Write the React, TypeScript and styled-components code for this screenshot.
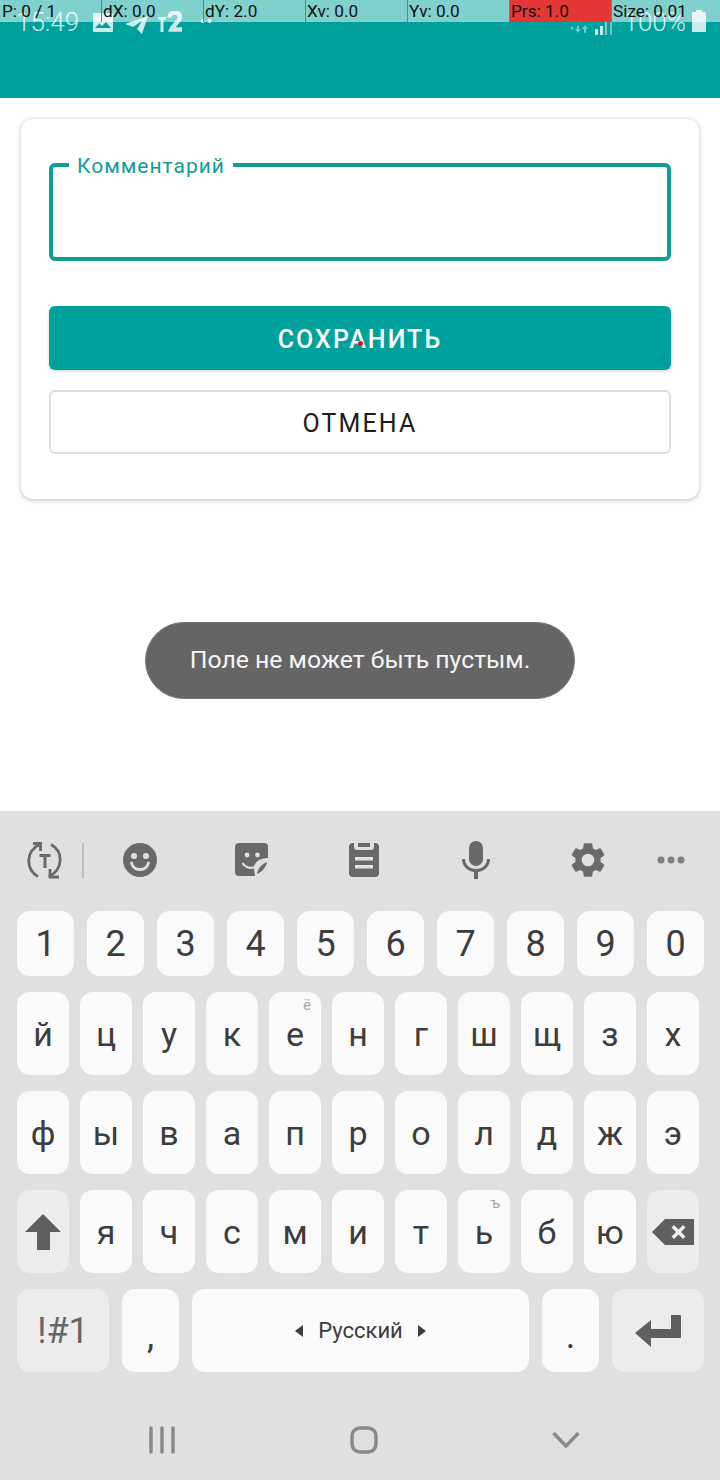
import styled, { createGlobalStyle } from "styled-components";

const POINTER_STATS = [
  { label: "P: 0 / 1" },
  { label: "dX: 0.0" },
  { label: "dY: 2.0" },
  { label: "Xv: 0.0" },
  { label: "Yv: 0.0" },
  { label: "Prs: 1.0", alert: true },
  { label: "Size: 0.01" },
];

const NUMBERS = ["1", "2", "3", "4", "5", "6", "7", "8", "9", "0"];
const ROW_ONE = ["й", "ц", "у", "к", "е", "н", "г", "ш", "щ", "з", "х"];
const ROW_TWO = ["ф", "ы", "в", "а", "п", "р", "о", "л", "д", "ж", "э"];
const ROW_THREE = ["я", "ч", "с", "м", "и", "т", "ь", "б", "ю"];
const HINTS: Record<string, string> = { е: "ё", ь: "ъ" };

const GlobalStyle = createGlobalStyle`
  html, body {
    margin: 0;
    padding: 0;
    background: #fff;
  }
  * {
    box-sizing: border-box;
  }
`;

const Page = styled.div`
  display: flex;
  flex-direction: column;
  font-family: Roboto, "Noto Sans", sans-serif;
  height: 1480px;
  overflow: hidden;
  position: relative;
  width: 720px;
`;

const Header = styled.header`
  background: #00a19d;
  flex-shrink: 0;
  height: 98px;
  position: relative;
`;

const StatusBar = styled.div`
  align-items: center;
  color: rgba(255, 255, 255, 0.8);
  display: flex;
  height: 44px;
  padding: 0 14px 0 16px;
`;

const Clock = styled.span`
  font-size: 26px;
  font-weight: 300;
  margin-right: 14px;
`;

const StatusIcon = styled.svg<{ $gap?: number; $drop?: number }>`
  display: block;
  fill: currentColor;
  flex-shrink: 0;
  margin-right: ${({ $gap }) => $gap ?? 0}px;
  margin-top: ${({ $drop }) => $drop ?? 0}px;
`;

const Spacer = styled.div`
  flex: 1;
`;

const Percent = styled.span`
  font-size: 26px;
  font-weight: 300;
  margin: 0 6px 0 12px;
`;

const PointerBar = styled.div`
  display: grid;
  grid-template-columns: 101px repeat(6, 102px) 7px;
  height: 22px;
  left: 0;
  position: absolute;
  top: 0;
  width: 720px;
`;

const PointerCell = styled.div<{ $alert?: boolean }>`
  background: ${({ $alert }) =>
    $alert ? "#e63737" : "rgba(255, 255, 255, 0.5)"};
  border-left: 1px solid #17a6a2;
  color: #111;
  font-size: 17.2px;
  line-height: 22px;
  overflow: visible;
  padding-left: 1px;
  white-space: nowrap;
  &:first-child {
    border-left: none;
    padding-left: 2px;
  }
`;

const BarTail = styled.div`
  background: rgba(255, 255, 255, 0.5);
`;

const Main = styled.main`
  flex: 1;
  padding: 21px 21px 0;
`;

const Card = styled.section`
  background: #fff;
  border-radius: 12px;
  box-shadow: 0 1px 5px rgba(0, 0, 0, 0.28);
  display: flex;
  flex-direction: column;
  height: 380px;
  padding: 44px 28px 0;
`;

const Field = styled.div`
  border: 4px solid #0f9d98;
  border-radius: 6px;
  height: 98px;
  margin-bottom: 45px;
  position: relative;
`;

const FieldLabel = styled.label`
  background: #fff;
  color: #0f9d98;
  font-size: 21px;
  left: 16px;
  letter-spacing: 1px;
  line-height: 24px;
  padding: 0 8px;
  position: absolute;
  top: -13px;
`;

const ActionButton = styled.button<{ $primary?: boolean }>`
  background: ${({ $primary }) => ($primary ? "#00a19d" : "#fff")};
  border: ${({ $primary }) => ($primary ? "none" : "2px solid #dedede")};
  border-radius: 6px;
  box-shadow: ${({ $primary }) =>
    $primary ? "0 1px 3px rgba(0, 0, 0, 0.2)" : "none"};
  color: ${({ $primary }) => ($primary ? "#fff" : "#1c1c1c")};
  font-family: inherit;
  font-size: 25px;
  font-weight: ${({ $primary }) => ($primary ? 500 : 400)};
  height: 64px;
  letter-spacing: 2.1px;
  margin-bottom: 20px;
  padding: 2px 0 0;
  position: relative;
  width: 100%;
`;

const TouchDot = styled.span`
  background: #d8141c;
  border-radius: 50%;
  height: 5px;
  left: 309px;
  position: absolute;
  top: 35px;
  width: 5px;
`;

const Toast = styled.div`
  align-items: center;
  background: #656565;
  border: 1px solid #777;
  border-radius: 39px;
  color: #f5f5f5;
  display: flex;
  font-size: 24.8px;
  height: 77px;
  justify-content: center;
  left: 145px;
  padding-bottom: 2px;
  position: absolute;
  top: 622px;
  width: 430px;
`;

const Keyboard = styled.div`
  background: #e0e0e0;
  flex-shrink: 0;
  height: 669px;
`;

const Toolbar = styled.div`
  align-items: center;
  color: #696969;
  display: flex;
  height: 100px;
  padding: 0 0 2px 17px;
`;

const ToolSlot = styled.div<{ $width: number }>`
  align-items: center;
  display: flex;
  flex-shrink: 0;
  justify-content: center;
  width: ${({ $width }) => $width}px;
`;

const ToolDivider = styled.div`
  background: #bdbdbd;
  flex-shrink: 0;
  height: 35px;
  margin-left: 9px;
  width: 2px;
`;

const ToolIcon = styled.svg`
  display: block;
  fill: currentColor;
  flex-shrink: 0;
`;

const KeyRows = styled.div`
  display: flex;
  flex-direction: column;
  gap: 16px;
  padding-left: 17px;
`;

const KeyRow = styled.div<{ $gap: number }>`
  display: flex;
  gap: ${({ $gap }) => $gap}px;
`;

const Key = styled.div<{ $width?: number; $short?: boolean; $fn?: boolean }>`
  align-items: center;
  background: ${({ $fn }) => ($fn ? "#ececec" : "#fafafa")};
  border-radius: 13px;
  color: #3d3d3d;
  display: flex;
  flex-shrink: 0;
  font-size: ${({ $short }) => ($short ? 36 : 34)}px;
  height: ${({ $short }) => ($short ? 65 : 83)}px;
  justify-content: center;
  position: relative;
  width: ${({ $width }) => $width ?? 52}px;
`;

const KeyHint = styled.span`
  color: #a8a8a8;
  font-size: 15px;
  line-height: 14px;
  position: absolute;
  right: 10px;
  top: 6px;
`;

const SymbolLabel = styled.span`
  color: #666;
  font-size: 36px;
`;

const Punctuation = styled.span`
  font-size: 36px;
  padding-top: 10px;
`;

const LanguageLabel = styled.div`
  align-items: center;
  color: #3d3d3d;
  display: flex;
  font-size: 22px;
  gap: 15px;
`;

const ArrowLeft = styled.span`
  border-bottom: 6px solid transparent;
  border-right: 8px solid #3d3d3d;
  border-top: 6px solid transparent;
`;

const ArrowRight = styled.span`
  border-bottom: 6px solid transparent;
  border-left: 8px solid #3d3d3d;
  border-top: 6px solid transparent;
`;

const NavBar = styled.nav`
  align-items: center;
  color: #8a8a8a;
  display: flex;
  height: 80px;
  margin-top: 28px;
  padding-left: 61px;
`;

const NavSlot = styled.div`
  display: flex;
  justify-content: center;
  width: 202px;
`;

const NavIcon = styled.svg`
  display: block;
  fill: none;
  stroke: currentColor;
`;

function KeyLetter({ letter }: { letter: string }) {
  return (
    <Key>
      {letter}
      {HINTS[letter] && <KeyHint>{HINTS[letter]}</KeyHint>}
    </Key>
  );
}

export default function App(): JSX.Element {
  return (
    <Page>
      <GlobalStyle />
      <Header>
        <StatusBar>
          <Clock>15:49</Clock>
          <StatusIcon width="20" height="19" viewBox="0 0 20 19" $gap={12}>
            <path d="M1 0h18a1 1 0 0 1 1 1v17a1 1 0 0 1-1 1H1a1 1 0 0 1-1-1V1a1 1 0 0 1 1-1zm1 15h16l-5-6-4 4-2.500-2.500z" fillRule="evenodd" />
            <circle cx="6" cy="5.500" r="2" />
          </StatusIcon>
          <StatusIcon width="23" height="18" viewBox="0 0 23 18" $gap={9} $drop={5}>
            <path d="M23 0 0 8l8 3 9-6-5 8 5 5z" />
          </StatusIcon>
          <StatusIcon width="25" height="21" viewBox="0 0 25 21" $gap={18} $drop={-1}>
            <path d="M1 6h8v2.500H6.500V21h-3V8.500H1z" />
            <path d="M12.500 6.500C12.500 0 23 0 23 6c0 4-6 7-8.500 12.500H25" fill="none" stroke="currentColor" strokeWidth="4.500" />
          </StatusIcon>
          <StatusIcon width="12" height="6" viewBox="0 0 12 6" $drop={-2}>
            <circle cx="2.500" cy="3" r="2" />
            <circle cx="9.500" cy="3" r="2" />
          </StatusIcon>
          <Spacer />
          <StatusIcon width="26" height="22" viewBox="0 0 26 22" $gap={5} $drop={-1}>
            <g fill="none" stroke="currentColor" strokeWidth="2.500" opacity="0.25">
              <path d="M1 7a14 14 0 0 1 20 0" />
              <path d="M5 11a9 9 0 0 1 12 0" />
            </g>
            <g opacity="0.55">
              <circle cx="8" cy="17" r="1.500" />
              <path d="M13 15h2v3h2l-3 4-3-4h2zM21 14l3 4h-2v4h-2v-4h-2z" />
            </g>
          </StatusIcon>
          <StatusIcon width="17" height="16" viewBox="0 0 17 16" $drop={9}>
            <path d="M0 10h3v6H0z" />
            <path d="M5 7h3v9H5z" />
            <path d="M10 3h2v13h-2z" opacity="0.6" />
            <path d="M15 0h2v16h-2z" opacity="0.5" />
          </StatusIcon>
          <Percent>100%</Percent>
          <StatusIcon width="14" height="22" viewBox="0 0 14 22" $drop={-2}>
            <path d="M4 0h6v2h3a1 1 0 0 1 1 1v18a1 1 0 0 1-1 1H1a1 1 0 0 1-1-1V3a1 1 0 0 1 1-1h3z" />
          </StatusIcon>
        </StatusBar>
        <PointerBar>
          {POINTER_STATS.map(stat => (
            <PointerCell key={stat.label} $alert={stat.alert}>
              {stat.label}
            </PointerCell>
          ))}
          <BarTail />
        </PointerBar>
      </Header>

      <Main>
        <Card>
          <Field>
            <FieldLabel>Комментарий</FieldLabel>
          </Field>
          <ActionButton $primary>
            СОХРАНИТЬ
            <TouchDot />
          </ActionButton>
          <ActionButton>ОТМЕНА</ActionButton>
        </Card>
      </Main>

      <Toast>Поле не может быть пустым.</Toast>

      <Keyboard>
        <Toolbar>
          <ToolSlot $width={56}>
            <ToolIcon width="37" height="37" viewBox="0 0 37 37">
              <g fill="none" stroke="currentColor" strokeWidth="2.800">
                <path d="M11 34.500C-2 27-1 9 12.500 2.500" />
                <path d="M6 1.500h7.500V9" />
                <path d="M24 2.500c13 7 12 25-2 32" />
                <path d="M23 27v8h9" />
              </g>
              <path d="M12.500 12h11v3h-4v11h-3V15h-4z" />
            </ToolIcon>
          </ToolSlot>
          <ToolDivider />
          <ToolSlot $width={112}>
            <ToolIcon width="34" height="34" viewBox="0 0 34 34">
              <path
                fillRule="evenodd"
                d="M17 0a17 17 0 1 1 0 34 17 17 0 0 1 0-34zM11 10a3 3 0 1 0 0 6 3 3 0 0 0 0-6zm12 0a3 3 0 1 0 0 6 3 3 0 0 0 0-6zM7 19c1 6 5 9 10 9s9-3 10-9l-2.500-.5C23.500 23 21 25 17 25s-6.500-2-7.500-6.500z"
              />
            </ToolIcon>
          </ToolSlot>
          <ToolSlot $width={112}>
            <ToolIcon width="34" height="34" viewBox="0 0 34 34">
              <path d="M4 0h25a4 4 0 0 1 4 4v11c-8 0-14 4-14 10 0 3 1 6 1 8H4a4 4 0 0 1-4-4V4a4 4 0 0 1 4-4z" />
              <circle cx="12" cy="12" r="2.400" fill="#e0e0e0" />
              <circle cx="22.500" cy="12" r="2.400" fill="#e0e0e0" />
              <path d="M7.500 20c2 4 7 6 12.500 4" fill="none" stroke="#e0e0e0" strokeWidth="2.200" />
              <path d="M22 31c1-6 5-10 10-12-1 5-5 10-10 12z" />
            </ToolIcon>
          </ToolSlot>
          <ToolSlot $width={112}>
            <ToolIcon width="30" height="34" viewBox="0 0 30 34">
              <path
                fillRule="evenodd"
                d="M4 0h1v4a3 3 0 0 0 3 3h14a3 3 0 0 0 3-3V0h1a4 4 0 0 1 4 4v26a4 4 0 0 1-4 4H4a4 4 0 0 1-4-4V4a4 4 0 0 1 4-4zm2 14v3.500h18V14zm0 8v3.500h18V22z"
              />
              <path d="M9 0h12v4H9z" />
            </ToolIcon>
          </ToolSlot>
          <ToolSlot $width={112}>
            <ToolIcon width="28" height="38" viewBox="0 0 28 38">
              <rect x="7" y="0" width="14" height="25" rx="7" />
              <path d="M0 18h3c0 6 5 10 11 10s11-4 11-10h3c0 7-5 12-12 13v7h-4v-7C5 30 0 25 0 18z" />
            </ToolIcon>
          </ToolSlot>
          <ToolSlot $width={112}>
            <ToolIcon width="42" height="42" viewBox="0 0 24 24">
              <path d="M19.140 12.940c.04-.3.060-.61.060-.94s-.02-.64-.07-.94l2.030-1.580a.49.490 0 0 0 .12-.61l-1.920-3.320a.488.488 0 0 0-.59-.22l-2.390.96a7 7 0 0 0-1.620-.94l-.36-2.540a.484.484 0 0 0-.48-.41h-3.840a.47.470 0 0 0-.47.410l-.36 2.540c-.59.24-1.130.57-1.620.94l-2.390-.96a.49.490 0 0 0-.59.22L2.740 8.870a.48.480 0 0 0 .12.610l2.030 1.580c-.05.3-.09.63-.09.940s.02.640.07.940l-2.030 1.580a.49.490 0 0 0-.12.610l1.920 3.320c.12.220.37.290.59.220l2.390-.96c.5.380 1.030.700 1.620.940l.36 2.540c.05.240.24.410.48.410h3.840c.24 0 .44-.17.47-.41l.36-2.540a7 7 0 0 0 1.620-.94l2.390.96c.22.080.47 0 .59-.22l1.920-3.320a.48.480 0 0 0-.12-.61zM12 15.600a3.600 3.600 0 1 1 0-7.200 3.600 3.600 0 0 1 0 7.200z" />
            </ToolIcon>
          </ToolSlot>
          <ToolSlot $width={54}>
            <ToolIcon width="28" height="8" viewBox="0 0 28 8" opacity="0.8">
              <circle cx="4" cy="4" r="3.500" />
              <circle cx="14" cy="4" r="3.500" />
              <circle cx="24" cy="4" r="3.500" />
            </ToolIcon>
          </ToolSlot>
        </Toolbar>

        <KeyRows>
          <KeyRow $gap={13}>
            {NUMBERS.map(n => (
              <Key key={n} $short $width={57}>
                {n}
              </Key>
            ))}
          </KeyRow>
          <KeyRow $gap={11}>
            {ROW_ONE.map(l => (
              <KeyLetter key={l} letter={l} />
            ))}
          </KeyRow>
          <KeyRow $gap={11}>
            {ROW_TWO.map(l => (
              <KeyLetter key={l} letter={l} />
            ))}
          </KeyRow>
          <KeyRow $gap={11}>
            <Key $fn>
              <ToolIcon width="36" height="36" viewBox="0 0 36 36" color="#5f5f5f">
                <path d="M18 0l18 18H25v18H12V18H0z" />
              </ToolIcon>
            </Key>
            {ROW_THREE.map(l => (
              <KeyLetter key={l} letter={l} />
            ))}
            <Key $fn>
              <ToolIcon width="42" height="26" viewBox="0 0 42 26" color="#5f5f5f">
                <path
                  fillRule="evenodd"
                  d="M13 0h29v26H13L0 13zm9 6-2.500 2.500L24 13l-4.500 4.500L22 20l4.500-4.500L31 20l2.500-2.500L29 13l4.500-4.500L31 6l-4.500 4.500z"
                />
              </ToolIcon>
            </Key>
          </KeyRow>
          <KeyRow $gap={13}>
            <Key $fn $width={92}>
              <SymbolLabel>!#1</SymbolLabel>
            </Key>
            <Key $width={57}>
              <Punctuation>,</Punctuation>
            </Key>
            <Key $width={337}>
              <LanguageLabel>
                <ArrowLeft />
                Русский
                <ArrowRight />
              </LanguageLabel>
            </Key>
            <Key $width={57}>
              <Punctuation>.</Punctuation>
            </Key>
            <Key $fn $width={92}>
              <ToolIcon width="46" height="32" viewBox="0 0 46 32" color="#5f5f5f">
                <path d="M36 0h9a1 1 0 0 1 1 1v21a1 1 0 0 1-1 1H16v9L0 18 16 5v9h20z" />
              </ToolIcon>
            </Key>
          </KeyRow>
        </KeyRows>

        <NavBar>
          <NavSlot>
            <NavIcon width="26" height="28" viewBox="0 0 26 28" strokeWidth="3.500" strokeLinecap="round">
              <path d="M2 2v24M13 2v24M24 2v24" />
            </NavIcon>
          </NavSlot>
          <NavSlot>
            <NavIcon width="28" height="28" viewBox="0 0 28 28" strokeWidth="3.500">
              <rect x="2" y="2" width="24" height="24" rx="8" />
            </NavIcon>
          </NavSlot>
          <NavSlot>
            <NavIcon width="28" height="18" viewBox="0 0 28 18" strokeWidth="3.500">
              <path d="M1.500 2 14 15 26.500 2" />
            </NavIcon>
          </NavSlot>
        </NavBar>
      </Keyboard>
    </Page>
  );
}
